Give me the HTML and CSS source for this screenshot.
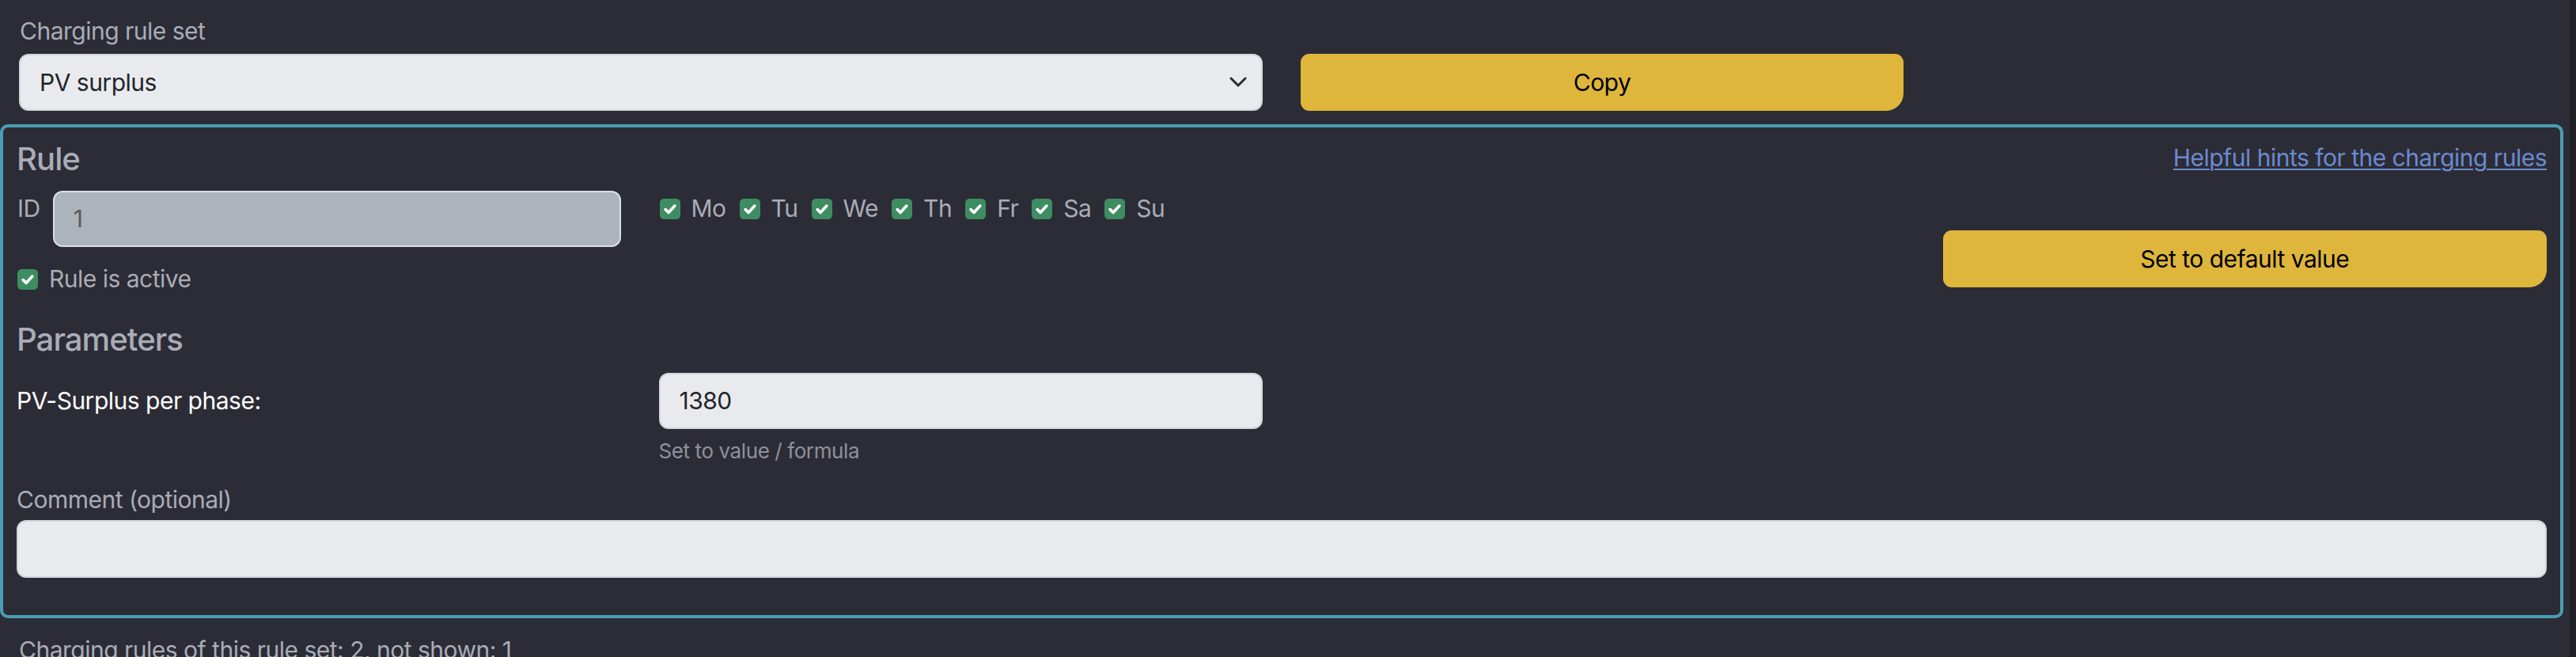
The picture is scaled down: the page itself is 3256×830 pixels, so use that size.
FILE: index.html
```html
<!DOCTYPE html>
<html lang="en">
<head>
<meta charset="utf-8">
<title>Charging rule set</title>
<link rel="stylesheet" href="styles.css">
</head>
<body>
<div class="page">
  <div class="top-grid">
    <div class="ruleset-field">
      <div class="label">Charging rule set</div>
      <div class="select">
        <span>PV surplus</span>
        <svg class="chevron" width="22" height="14" viewBox="0 0 22 14"><path d="M2 2l9 9 9-9" fill="none" stroke="#2b2d33" stroke-width="3" stroke-linecap="round" stroke-linejoin="round"/></svg>
      </div>
    </div>
    <div class="copy-col">
      <button class="btn-yellow">Copy</button>
    </div>
  </div>

  <section class="panel">
    <div class="rule-grid">
      <h5 class="heading rule-heading">Rule</h5>
      <a class="hint-link" href="#">Helpful hints for the charging rules</a>
      <div class="id-field">
        <span class="label">ID</span>
        <div class="input input-disabled">1</div>
      </div>
      <div class="days">
        <label class="check"><svg class="cb" viewBox="0 0 20 20"><rect width="20" height="20" rx="4" fill="#3e8c62"/><path d="M5.5 10.5l3 3 6-6.5" fill="none" stroke="#fff" stroke-width="2.8" stroke-linecap="round" stroke-linejoin="round"/></svg><span>Mo</span></label>
        <label class="check"><svg class="cb" viewBox="0 0 20 20"><rect width="20" height="20" rx="4" fill="#3e8c62"/><path d="M5.5 10.5l3 3 6-6.5" fill="none" stroke="#fff" stroke-width="2.8" stroke-linecap="round" stroke-linejoin="round"/></svg><span>Tu</span></label>
        <label class="check"><svg class="cb" viewBox="0 0 20 20"><rect width="20" height="20" rx="4" fill="#3e8c62"/><path d="M5.5 10.5l3 3 6-6.5" fill="none" stroke="#fff" stroke-width="2.8" stroke-linecap="round" stroke-linejoin="round"/></svg><span>We</span></label>
        <label class="check"><svg class="cb" viewBox="0 0 20 20"><rect width="20" height="20" rx="4" fill="#3e8c62"/><path d="M5.5 10.5l3 3 6-6.5" fill="none" stroke="#fff" stroke-width="2.8" stroke-linecap="round" stroke-linejoin="round"/></svg><span>Th</span></label>
        <label class="check"><svg class="cb" viewBox="0 0 20 20"><rect width="20" height="20" rx="4" fill="#3e8c62"/><path d="M5.5 10.5l3 3 6-6.5" fill="none" stroke="#fff" stroke-width="2.8" stroke-linecap="round" stroke-linejoin="round"/></svg><span>Fr</span></label>
        <label class="check"><svg class="cb" viewBox="0 0 20 20"><rect width="20" height="20" rx="4" fill="#3e8c62"/><path d="M5.5 10.5l3 3 6-6.5" fill="none" stroke="#fff" stroke-width="2.8" stroke-linecap="round" stroke-linejoin="round"/></svg><span>Sa</span></label>
        <label class="check"><svg class="cb" viewBox="0 0 20 20"><rect width="20" height="20" rx="4" fill="#3e8c62"/><path d="M5.5 10.5l3 3 6-6.5" fill="none" stroke="#fff" stroke-width="2.8" stroke-linecap="round" stroke-linejoin="round"/></svg><span>Su</span></label>
      </div>
      <label class="check active-check"><svg class="cb" viewBox="0 0 20 20"><rect width="20" height="20" rx="4" fill="#3e8c62"/><path d="M5.5 10.5l3 3 6-6.5" fill="none" stroke="#fff" stroke-width="2.8" stroke-linecap="round" stroke-linejoin="round"/></svg><span>Rule is active</span></label>
      <button class="btn-yellow default-btn">Set to default value</button>
    </div>

    <h5 class="heading params-heading">Parameters</h5>
    <div class="param-grid">
      <div class="param-label">PV-Surplus per phase:</div>
      <div class="param-value">
        <div class="input">1380</div>
        <div class="form-text">Set to value / formula</div>
      </div>
    </div>

    <div class="comment-field">
      <div class="label">Comment (optional)</div>
      <div class="input comment-input"></div>
    </div>
  </section>

  <p class="footer-note">Charging rules of this rule set: 2, not shown: 1</p>
</div>
</body>
</html>
```
FILE: styles.css
```css
* { box-sizing: border-box; }

html, body {
  margin: 0;
  padding: 0;
  overflow: hidden;
}

html {
  background: linear-gradient(to right, #2c2c36 3248px, #1f1f25 3248px);
  min-height: 100%;
}

body {
  font-family: Inter, "Liberation Sans", sans-serif;
  font-size: 30px;
  line-height: 45px;
  color: #a9adb7;
  letter-spacing: -0.5px;
}

.page {
  width: 3240px;
  padding-top: 17px;
}

.label {
  color: #a9adb7;
}

/* top row */
.top-grid {
  display: grid;
  grid-template-columns: repeat(4, 1fr);
  column-gap: 48px;
  padding: 0 24px;
  align-items: end;
}

.ruleset-field {
  grid-column: 1 / 3;
}

.ruleset-field .label {
  padding-left: 1px;
  margin-bottom: 6px;
}

.select {
  height: 72px;
  background: #e9eaee;
  border: 2px solid #d2d6db;
  border-radius: 12px;
  color: #212529;
  display: flex;
  align-items: center;
  justify-content: space-between;
  padding: 0 18px 0 24px;
}

.chevron {
  display: block;
}

.copy-col {
  grid-column: 3 / 4;
}

.btn-yellow {
  display: block;
  width: 100%;
  height: 72px;
  border: 0;
  background: #dfb63c;
  color: #000;
  font-family: inherit;
  font-size: 30px;
  letter-spacing: -0.5px;
  border-radius: 11px 11px 22px 11px;
  padding: 0;
  cursor: pointer;
}

/* panel */
.panel {
  margin-top: 17px;
  border: 4px solid #4a9db4;
  border-radius: 10px;
  padding: 16px 17px 16px 17px;
}

.rule-grid {
  display: grid;
  grid-template-columns: repeat(4, 1fr);
  column-gap: 48px;
  align-items: start;
}

.heading {
  margin: 0;
  font-size: 40px;
  line-height: 48px;
  font-weight: 500;
  color: #a9adb7;
  letter-spacing: -0.9px;
}

.rule-heading {
  grid-column: 1 / 4;
  grid-row: 1;
  margin-bottom: 16px;
}

.hint-link {
  grid-column: 4;
  grid-row: 1;
  justify-self: end;
  color: #6a8bcf;
  text-decoration: underline;
  text-underline-offset: 3px;
  text-decoration-thickness: 2px;
}

.id-field {
  grid-column: 1;
  grid-row: 2;
  display: flex;
  align-items: flex-start;
  gap: 16px;
  padding-left: 1px;
}

.id-field .input {
  flex: 1;
}

.input {
  height: 72px;
  background: #e9eaee;
  border: 2px solid #d2d6db;
  border-radius: 12px;
  color: #212529;
  padding: 11px 24px;
}

.input-disabled {
  height: 71px;
  background: #adb3bb;
  border-color: #dcdfe3;
  color: #555a62;
}

.days {
  grid-column: 2 / 4;
  grid-row: 2;
  display: flex;
  gap: 17px;
  padding-left: 1px;
}

.check {
  display: flex;
  align-items: center;
  gap: 14px;
  color: #a9adb7;
  height: 45px;
}

.cb {
  width: 26px;
  height: 26px;
  display: block;
  flex: none;
}

.active-check {
  grid-column: 1 / 4;
  grid-row: 3;
  margin-top: 18px;
  padding-left: 1px;
}

.default-btn {
  grid-column: 4;
  grid-row: 2 / 4;
  margin-top: 50px;
}

.params-heading {
  margin-top: 30px;
  margin-bottom: 18px;
}

.param-grid {
  display: grid;
  grid-template-columns: repeat(4, 1fr);
  column-gap: 48px;
}

.param-label {
  grid-column: 1;
  height: 71px;
  display: flex;
  align-items: center;
  color: #ffffff;
}

.param-value {
  grid-column: 2;
}

.param-value .input {
  height: 71px;
}

.form-text {
  margin-top: 8px;
  font-size: 26px;
  line-height: 39px;
  color: #8e929b;
  letter-spacing: -0.4px;
}

.comment-field {
  margin-top: 20px;
  margin-bottom: 31px;
}

.comment-field .label {
  margin-bottom: 3px;
}

.comment-input {
  height: 73px;
}

.footer-note {
  margin: 18px 0 0 0;
  padding-left: 24px;
  color: #a9adb7;
}
```
